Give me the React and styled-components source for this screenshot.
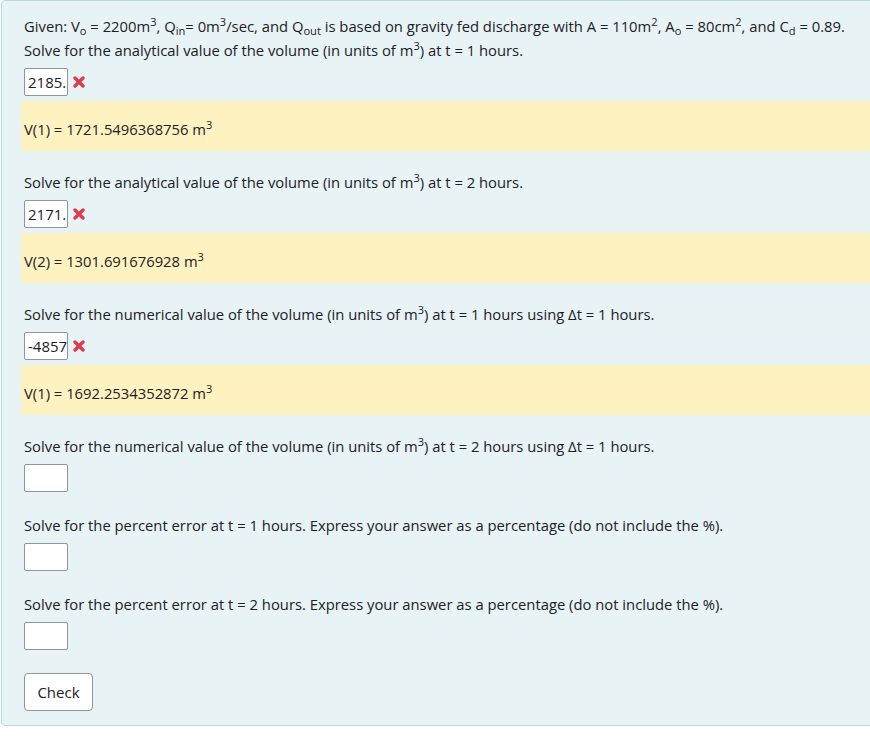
import React from 'react';
import styled, { createGlobalStyle } from 'styled-components';

const GlobalStyle = createGlobalStyle`
  body {
    margin: 0;
    background: #ffffff;
    font-family: 'Open Sans', 'Noto Sans', sans-serif;
    color: #1d2125;
  }
  sub, sup {
    position: relative;
    font-size: 75%;
    line-height: 0;
    vertical-align: baseline;
  }
  sup { top: -0.5em; }
  sub { bottom: -0.25em; }
`;

const Page = styled.div`
  width: 870px;
  height: 736px;
  overflow: hidden;
`;

const Card = styled.div`
  display: flex;
  flex-direction: column;
  width: 900px;
  margin: 0 0 0 1px;
  padding: 13px 0 14px 22px;
  background: #e7f3f5;
  border: 1px solid #b8dce2;
  border-radius: 4px;
  font-size: 14.8px;
  line-height: 24px;
`;

const Part = styled.div`
  display: flex;
  flex-direction: column;
  & + & {
    margin-top: 19px;
  }
`;

const Text = styled.p`
  margin: 0;
  height: ${(p) => p.$lines * 24}px;
`;

const AnswerRow = styled.div`
  display: flex;
  align-items: center;
  gap: 5px;
  height: 28px;
  margin: 6px 0 2px;
`;

const Answer = styled.div`
  box-sizing: border-box;
  width: 44px;
  height: 28px;
  padding: 0 0 0 3px;
  background: #ffffff;
  border: 1px solid #8f959e;
  border-radius: 2px;
  font-size: 15px;
  line-height: 26px;
  white-space: nowrap;
  overflow: hidden;
`;

const Outcome = styled.div`
  margin: 3px 0 0 -3px;
  padding: 16px 3px 10px;
  height: 24px;
  background: #fff2c1;
`;

const CheckButton = styled.button`
  align-self: flex-start;
  margin-top: 21px;
  width: 69px;
  height: 38px;
  background: #ffffff;
  border: 1px solid #8f959e;
  border-radius: 4px;
  font-family: inherit;
  font-size: 15px;
  color: #1d2125;
  cursor: pointer;
`;

const Cross = () => (
  <svg width="12" height="12" viewBox="0 0 12 12">
    <path d="M2 2 L10 10 M10 2 L2 10" stroke="#dc3d4a" strokeWidth="3.4" strokeLinecap="round" />
  </svg>
);

const m3 = <>m<sup>3</sup></>;

const parts = [
  {
    text: <>Solve for the analytical value of the volume (in units of {m3}) at t = 2 hours.</>,
    value: '2171.',
    wrong: true,
    outcome: <>V(2) = 1301.691676928 {m3}</>,
  },
  {
    text: <>Solve for the numerical value of the volume (in units of {m3}) at t = 1 hours using Δt = 1 hours.</>,
    value: '-4857',
    wrong: true,
    outcome: <>V(1) = 1692.2534352872 {m3}</>,
  },
  {
    text: <>Solve for the numerical value of the volume (in units of {m3}) at t = 2 hours using Δt = 1 hours.</>,
    value: '',
  },
  {
    text: <>Solve for the percent error at t = 1 hours. Express your answer as a percentage (do not include the %).</>,
    value: '',
  },
  {
    text: <>Solve for the percent error at t = 2 hours. Express your answer as a percentage (do not include the %).</>,
    value: '',
  },
];

const QuestionPart = ({ text, value, wrong, outcome, lines = 1 }) => (
  <Part>
    <Text $lines={lines}>{text}</Text>
    <AnswerRow>
      <Answer>{value}</Answer>
      {wrong && <Cross />}
    </AnswerRow>
    {outcome && <Outcome>{outcome}</Outcome>}
  </Part>
);

export default function App() {
  return (
    <Page>
      <GlobalStyle />
      <Card>
        <QuestionPart
          lines={2}
          text={
            <>
              Given: V<sub>o</sub> = 2200m<sup>3</sup>, Q<sub>in</sub>= 0m<sup>3</sup>/sec, and Q<sub>out</sub> is based
              on gravity fed discharge with A = 110m<sup>2</sup>, A<sub>o</sub> = 80cm<sup>2</sup>, and C<sub>d</sub> = 0.89.
              <br />
              Solve for the analytical value of the volume (in units of {m3}) at t = 1 hours.
            </>
          }
          value="2185."
          wrong
          outcome={<>V(1) = 1721.5496368756 {m3}</>}
        />
        {parts.map((p, i) => (
          <QuestionPart key={i} {...p} />
        ))}
        <CheckButton>Check</CheckButton>
      </Card>
    </Page>
  );
}
